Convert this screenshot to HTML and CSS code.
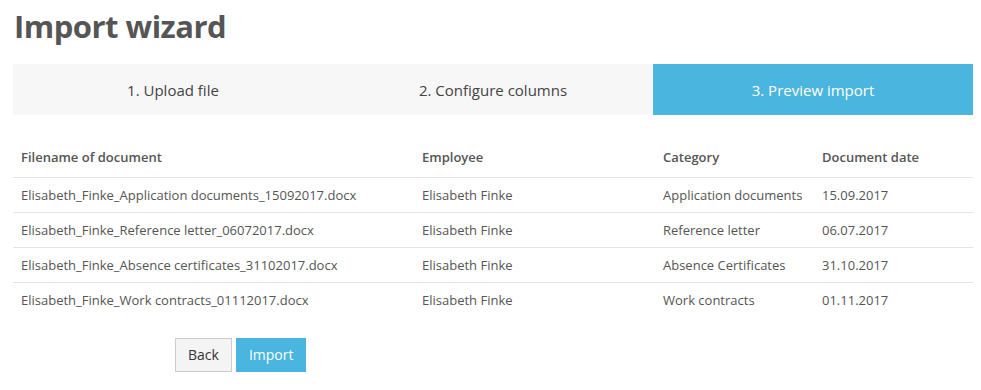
FILE: index.html
```html
<!DOCTYPE html>
<html lang="en">
<head>
<meta charset="utf-8">
<title>Import wizard</title>
<link rel="stylesheet" href="styles.css">
</head>
<body>
<div class="page">
  <h1 class="title">Import wizard</h1>
  <div class="steps">
    <div class="step">1. Upload file</div>
    <div class="step">2. Configure columns</div>
    <div class="step step-active">3. Preview import</div>
  </div>
  <table class="preview">
    <colgroup>
      <col class="c-file"><col class="c-emp"><col class="c-cat"><col class="c-date">
    </colgroup>
    <thead>
      <tr><th>Filename of document</th><th>Employee</th><th>Category</th><th>Document date</th></tr>
    </thead>
    <tbody>
      <tr><td>Elisabeth_Finke_Application documents_15092017.docx</td><td>Elisabeth Finke</td><td>Application documents</td><td>15.09.2017</td></tr>
      <tr><td>Elisabeth_Finke_Reference letter_06072017.docx</td><td>Elisabeth Finke</td><td>Reference letter</td><td>06.07.2017</td></tr>
      <tr><td>Elisabeth_Finke_Absence certificates_31102017.docx</td><td>Elisabeth Finke</td><td>Absence Certificates</td><td>31.10.2017</td></tr>
      <tr><td>Elisabeth_Finke_Work contracts_01112017.docx</td><td>Elisabeth Finke</td><td>Work contracts</td><td>01.11.2017</td></tr>
    </tbody>
  </table>
  <div class="actions">
    <button class="btn btn-default" type="button">Back</button>
    <button class="btn btn-primary" type="button">Import</button>
  </div>
</div>
</body>
</html>
```
FILE: styles.css
```css
* { box-sizing: border-box; }
html, body { margin: 0; padding: 0; background: #fff; }
body {
  font-family: "Open Sans", "DejaVu Sans", sans-serif;
  color: #555;
}
.page {
  width: 960px;
  margin-left: 13px;
  padding-top: 6px;
}
.title {
  margin: 0 0 0 1px;
  font-size: 31px;
  font-weight: 700;
  letter-spacing: -0.5px;
  line-height: 40px;
  color: #555;
}
.steps {
  display: flex;
  margin-top: 18px;
}
.step {
  flex: 1 1 0;
  height: 51px;
  display: flex;
  align-items: center;
  justify-content: center;
  background: #f7f7f7;
  font-size: 15px;
  color: #444;
}
.step-active {
  background: #4ab5de;
  color: #fff;
}
.preview {
  width: 960px;
  margin-top: 24px;
  border-collapse: collapse;
  table-layout: fixed;
  font-size: 13px;
  color: #555;
}
.c-file { width: 401px; }
.c-emp { width: 241px; }
.c-cat { width: 159px; }
.c-date { width: 159px; }
.preview th {
  text-align: left;
  font-weight: 600;
  padding: 8px 8px 10px;
  line-height: 20px;
  border-bottom: 1px solid #e4e4e4;
}
.preview td {
  padding: 7px 8px 7px;
  line-height: 20px;
  border-bottom: 1px solid #e4e4e4;
  white-space: nowrap;
}
.preview tbody tr:last-child td { border-bottom: none; }
.actions {
  display: flex;
  gap: 4px;
  margin-top: 21px;
  margin-left: 162px;
}
.btn {
  font-family: "Open Sans", "DejaVu Sans", sans-serif;
  font-size: 14px;
  height: 34px;
  padding: 0 12px;
  border: 1px solid transparent;
  border-radius: 0;
  line-height: 32px;
}
.btn-default {
  background: #f4f4f4;
  border-color: #ccc;
  color: #333;
}
.btn-primary {
  background: #4ab5de;
  border-color: #4ab5de;
  color: #fff;
}
```
